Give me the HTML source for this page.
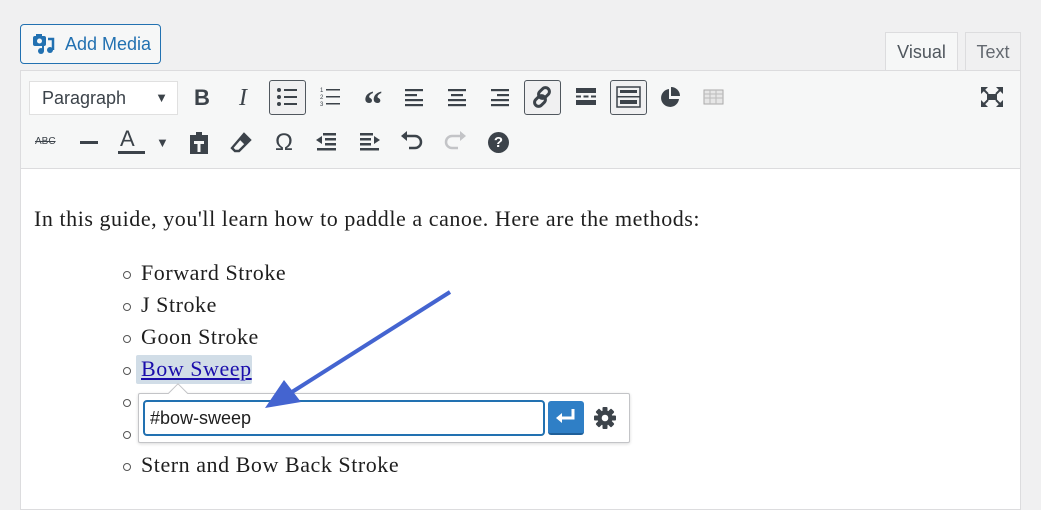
<!DOCTYPE html>
<html><head><meta charset="utf-8"><style>
*{margin:0;padding:0;box-sizing:border-box}
body{width:1041px;height:502px;background:#f0f0f1;position:relative;overflow:hidden;font-family:"Liberation Sans",sans-serif}
.a{position:absolute}
.btnm{left:20px;top:24px;width:141px;height:40px;border:1px solid #2271b1;border-radius:4px;background:#f6f7f7;color:#2271b1;font-size:18px;line-height:38px;padding-left:44px}
.tab{top:32px;height:39px;border:1px solid #dcdcde;border-bottom:none;font-size:18px;color:#50575e;line-height:38px;text-align:center}
.ed{left:20px;top:70px;width:1001px;height:440px;border:1px solid #dcdcde;background:#fff}
.tb{left:21px;top:71px;width:999px;height:98px;background:#f6f7f7;border-bottom:1px solid #dcdcde}
.ic{position:absolute;color:#3c434a;font-size:22px;text-align:center;width:30px;line-height:30px}
.sel{border:1px solid #50575e;border-radius:3px;background:#f0f0f1}
.txt{font-family:"Liberation Serif",serif;font-size:22px;letter-spacing:0.55px;color:#1e1e1e}
.li{position:absolute;left:141px}
.bul{position:absolute;left:123px;width:8px;height:8px;border:1px solid #555;border-radius:50%}
</style></head><body>
<div class="a btnm">Add Media</div>
<svg class="a" style="left:32px;top:33px" width="24" height="22" viewBox="0 0 24 22"><rect x="1" y="3" width="13" height="10" rx="2" fill="#2271b1"/><rect x="4" y="1" width="6" height="3" fill="#2271b1"/><circle cx="7.5" cy="8" r="2.5" fill="#f6f7f7"/><path d="M16 6h5v11" stroke="#2271b1" stroke-width="2.5" fill="none"/><circle cx="18" cy="17" r="3" fill="#2271b1"/><circle cx="9" cy="18" r="3" fill="#2271b1"/><path d="M11 18V12" stroke="#2271b1" stroke-width="2"/></svg>
<div class="a tab" style="left:885px;width:73px;background:#f6f7f7;height:40px">Visual</div>
<div class="a tab" style="left:965px;width:56px;background:#f0f0f1;color:#646970">Text</div>
<div class="a ed"></div>
<div class="a tb"></div>
<div class="a" style="left:29px;top:81px;width:149px;height:34px;background:#fff;border:1px solid #e0e0e0;font-size:18px;color:#3c434a;line-height:32px;padding-left:12px">Paragraph<span style="position:absolute;right:9px;font-size:13px">▼</span></div>
<div class="ic" style="left:187px;top:83px;font-weight:bold">B</div>
<div class="ic" style="left:228px;top:83px;font-style:italic;font-family:'Liberation Serif',serif;font-size:24px">I</div>
<div class="ic sel" style="left:269px;top:80px;width:37px;height:35px"></div>
<svg class="a" style="left:276px;top:86px" width="22" height="22"><g fill="#3c434a"><circle cx="3" cy="4" r="2"/><circle cx="3" cy="11" r="2"/><circle cx="3" cy="18" r="2"/><rect x="8" y="3" width="13" height="2"/><rect x="8" y="10" width="13" height="2"/><rect x="8" y="17" width="13" height="2"/></g></svg>
<svg class="a" style="left:320px;top:86px" width="22" height="22"><g fill="#3c434a" font-size="6" font-family="Liberation Sans"><text x="0" y="6">1</text><text x="0" y="13">2</text><text x="0" y="20">3</text><rect x="6" y="3" width="14" height="1.5"/><rect x="6" y="10" width="14" height="1.5"/><rect x="6" y="17" width="14" height="1.5"/></g></svg>
<div class="ic" style="left:358px;top:85px;font-family:'Liberation Serif',serif;font-weight:bold;font-size:38px;line-height:40px">“</div>
<svg class="a" style="left:403px;top:86px" width="120" height="22"><g fill="#3c434a"><rect x="2" y="3" width="18" height="2.2"/><rect x="2" y="8" width="12" height="2.2"/><rect x="2" y="13" width="18" height="2.2"/><rect x="2" y="18" width="18" height="2.2"/><rect x="45" y="3" width="18" height="2.2"/><rect x="48" y="8" width="12" height="2.2"/><rect x="45" y="13" width="18" height="2.2"/><rect x="45" y="18" width="18" height="2.2"/><rect x="88" y="3" width="18" height="2.2"/><rect x="94" y="8" width="12" height="2.2"/><rect x="88" y="13" width="18" height="2.2"/><rect x="88" y="18" width="18" height="2.2"/></g></svg>
<div class="ic sel" style="left:524px;top:80px;width:37px;height:35px"></div>
<svg class="a" style="left:531px;top:86px" width="22" height="22"><g stroke="#3c434a" stroke-width="3" fill="none"><rect x="9" y="1" width="8" height="12" rx="4" transform="rotate(45 13 7)"/><rect x="5" y="9" width="8" height="12" rx="4" transform="rotate(45 9 15)"/></g></svg>
<svg class="a" style="left:576px;top:88px" width="20" height="18"><g fill="#3c434a"><rect x="0" y="0" width="20" height="5"/><rect x="0" y="7.5" width="5" height="2"/><rect x="7.5" y="7.5" width="5" height="2"/><rect x="15" y="7.5" width="5" height="2"/><rect x="0" y="12" width="20" height="5"/></g></svg>
<div class="ic sel" style="left:610px;top:80px;width:37px;height:35px"></div>
<svg class="a" style="left:616px;top:86px" width="25" height="22"><rect x="1" y="1" width="23" height="20" fill="none" stroke="#3c434a" stroke-width="1.5"/><rect x="1" y="10" width="23" height="1.5" fill="#3c434a"/><g fill="#3c434a"><rect x="4" y="4" width="17" height="3"/><rect x="4" y="14" width="17" height="4"/></g></svg>
<svg class="a" style="left:660px;top:87px" width="21" height="21"><path d="M9 2A9 9 0 1 0 19 12H9Z" fill="#3c434a"/><path d="M11 0A9 9 0 0 1 20 9H11Z" fill="#3c434a"/></svg>
<svg class="a" style="left:703px;top:88px" width="22" height="18"><rect x="1" y="2" width="19" height="14" fill="#e6e6e6" stroke="#aaa"/><path d="M1 6h19M7 2v14M13 2v14M1 10h19" stroke="#bbb"/></svg>
<svg class="a" style="left:980px;top:86px" width="24" height="22"><g fill="#3c434a"><path d="M1 1h7l-7 7z"/><path d="M23 1h-7l7 7z"/><path d="M1 21h7l-7-7z"/><path d="M23 21h-7l7-7z"/><rect x="7" y="8" width="10" height="6"/></g><path d="M3 3l5 5M21 3l-5 5M3 19l5-5M21 19l-5-5" stroke="#3c434a" stroke-width="2"/></svg>
<div class="a" style="left:35px;top:136px;font-size:10px;color:#3c434a;text-decoration:line-through">ABC</div>
<div class="a" style="left:80px;top:141px;width:18px;height:3px;background:#3c434a"></div>
<div class="a" style="left:120px;top:126px;font-size:22px;color:#3c434a">A</div>
<div class="a" style="left:118px;top:151px;width:27px;height:3px;background:#3c434a"></div>
<div class="a" style="left:156px;top:135px;font-size:13px;color:#3c434a">▼</div>
<svg class="a" style="left:188px;top:131px" width="22" height="24"><path d="M2 4h6V1h6v3h6v19H2z" fill="#3c434a"/><path d="M6 10h10v3h-3.5v8h-3v-8H6z" fill="#f6f7f7"/></svg>
<svg class="a" style="left:230px;top:132px" width="22" height="22"><path d="M14 2l6 6-11 11H5L2 16z" fill="none" stroke="#3c434a" stroke-width="2.4"/><path d="M14 2l6 6-5 5-6-6z" fill="#3c434a"/></svg>
<div class="ic" style="left:269px;top:128px;font-size:24px">Ω</div>
<svg class="a" style="left:315px;top:132px" width="22" height="22"><g fill="#3c434a"><rect x="8" y="1" width="13" height="2.5"/><rect x="10" y="6" width="11" height="2.5"/><rect x="10" y="11" width="11" height="2.5"/><rect x="2" y="16" width="19" height="2.5"/><path d="M1 8l6-4v8z"/></g></svg>
<svg class="a" style="left:359px;top:132px" width="22" height="22"><g fill="#3c434a"><rect x="1" y="1" width="13" height="2.5"/><rect x="1" y="6" width="11" height="2.5"/><rect x="1" y="11" width="11" height="2.5"/><rect x="1" y="16" width="19" height="2.5"/><path d="M21 8l-6-4v8z"/></g></svg>
<svg class="a" style="left:400px;top:131px" width="24" height="22"><path d="M6 5h9a6 6 0 0 1 0 12H9" fill="none" stroke="#3c434a" stroke-width="2.5"/><path d="M1 5l6-5v10z" fill="#3c434a"/></svg>
<svg class="a" style="left:443px;top:131px" width="24" height="22"><path d="M18 5H9a6 6 0 0 0 0 12h6" fill="none" stroke="#c3c4c7" stroke-width="2.5"/><path d="M23 5l-6-5v10z" fill="#c3c4c7"/></svg>
<div class="a" style="left:488px;top:132px;width:21px;height:21px;border-radius:50%;background:#3c434a;color:#fff;font-weight:bold;font-size:15px;text-align:center;line-height:21px">?</div>
<div class="a txt" style="left:34px;top:206px">In this guide, you'll learn how to paddle a canoe. Here are the methods:</div>
<div class="bul" style="top:271px"></div><div class="li txt" style="top:260px">Forward Stroke</div>
<div class="bul" style="top:303px"></div><div class="li txt" style="top:292px">J Stroke</div>
<div class="bul" style="top:335px"></div><div class="li txt" style="top:324px">Goon Stroke</div>
<div class="a" style="left:136px;top:355px;width:116px;height:29px;background:#d1dde7;border-radius:2px"></div>
<div class="bul" style="top:367px"></div><div class="li txt" style="top:356px;color:#1a0dab;text-decoration:underline">Bow Sweep</div>
<div class="bul" style="top:399px"></div>
<div class="bul" style="top:431px"></div>
<div class="bul" style="top:463px"></div><div class="li txt" style="top:452px">Stern and Bow Back Stroke</div>
<div class="a" style="left:138px;top:393px;width:492px;height:50px;background:#fff;border:1px solid #c3c4c7;border-radius:2px;box-shadow:0 1px 3px rgba(0,0,0,.15)"></div>
<div class="a" style="left:171px;top:386px;width:14px;height:14px;background:#fff;border-left:1px solid #c3c4c7;border-top:1px solid #c3c4c7;transform:rotate(45deg)"></div>
<div class="a" style="left:143px;top:400px;width:402px;height:36px;border:2px solid #2271b1;border-radius:4px;background:#fff;font-size:18px;color:#1e1e1e;line-height:32px;padding-left:5px">#bow-sweep</div>
<div class="a" style="left:548px;top:401px;width:36px;height:34px;background:#2f7fc6;border-radius:3px;border-bottom:2px solid #1f5f99"></div>
<svg class="a" style="left:554px;top:407px" width="24" height="20"><path d="M19 2v9H6" fill="none" stroke="#fff" stroke-width="3"/><path d="M2 11l6-5v10z" fill="#fff"/></svg>
<svg class="a" style="left:593px;top:406px" width="24" height="24" viewBox="0 0 24 24"><g fill="#3c434a"><circle cx="12" cy="12" r="7.5"/><g><rect x="9.5" y="1" width="5" height="22" rx="1"/><rect x="9.5" y="1" width="5" height="22" rx="1" transform="rotate(45 12 12)"/><rect x="9.5" y="1" width="5" height="22" rx="1" transform="rotate(90 12 12)"/><rect x="9.5" y="1" width="5" height="22" rx="1" transform="rotate(135 12 12)"/></g></g><circle cx="12" cy="12" r="3.3" fill="#fff"/></svg>
<svg class="a" style="left:0;top:0" width="1041" height="502"><path d="M450 292L292 392" stroke="#4464d0" stroke-width="4"/><path d="M265 408L284 380L301 402Z" fill="#4464d0"/></svg>
</body></html>
